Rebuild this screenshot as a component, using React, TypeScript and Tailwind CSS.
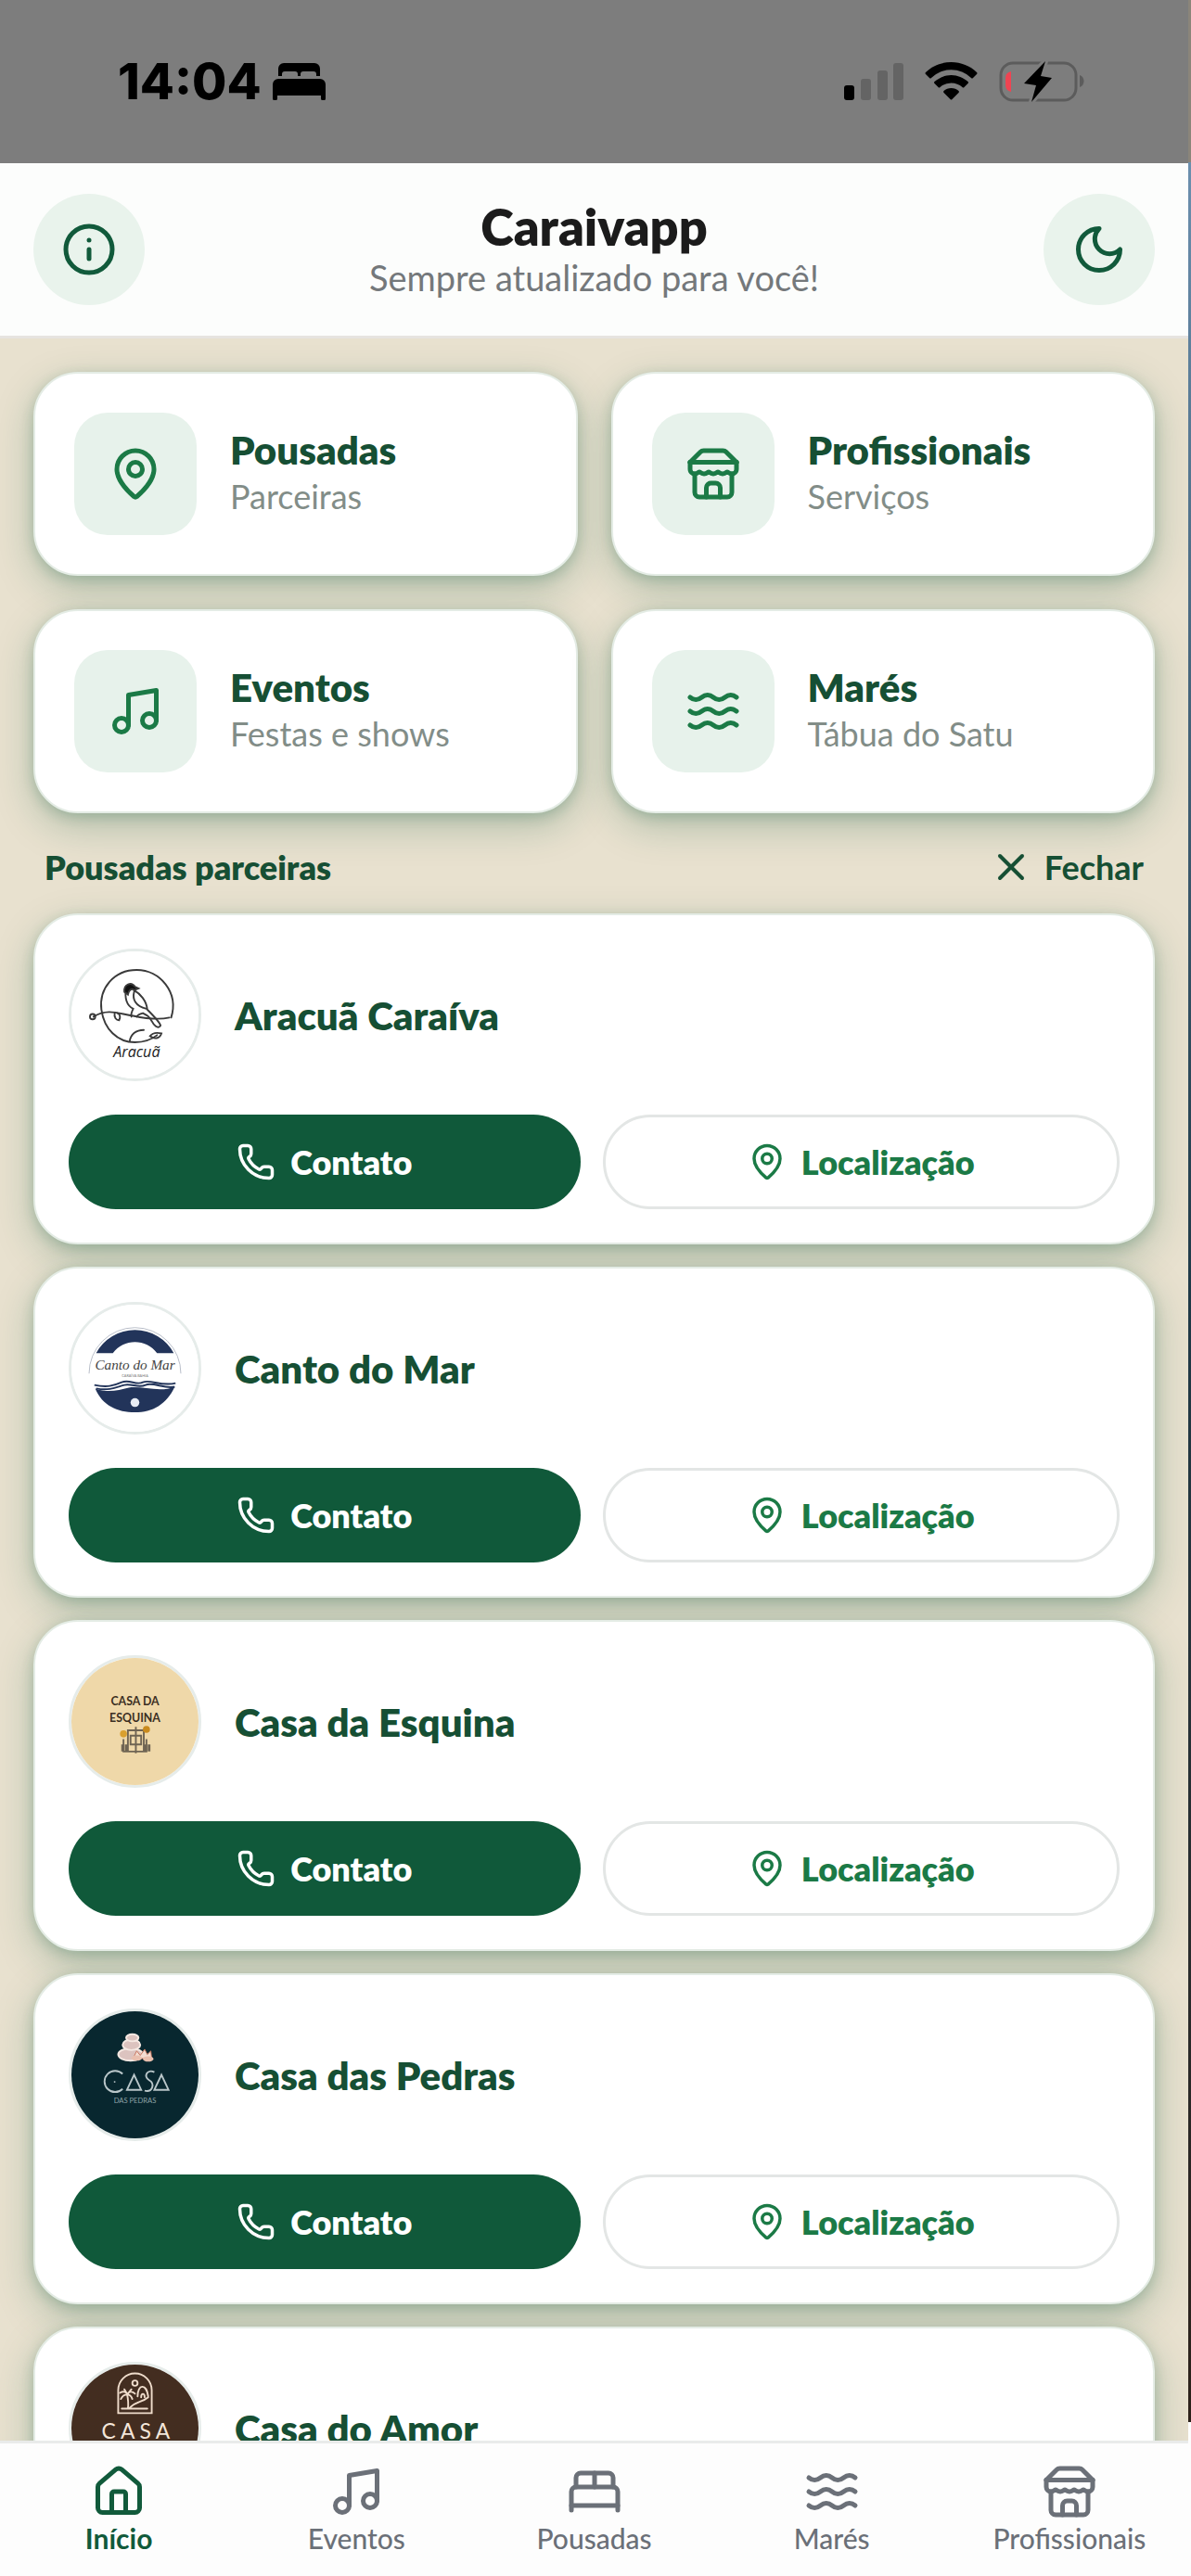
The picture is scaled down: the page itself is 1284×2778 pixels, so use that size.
import React from 'react';
import {
  BedDouble,
  House,
  Info,
  LucideIcon,
  MapPin,
  Music,
  Phone,
  Waves,
  X,
} from 'lucide-react';

interface IconProps {
  size?: number;
  className?: string;
}

type IconType = LucideIcon | React.FC<IconProps>;

interface Category {
  title: string;
  subtitle: string;
  icon: IconType;
}

interface Lodging {
  name: string;
  logo: React.FC;
}

const StoreIcon: React.FC<IconProps> = ({ size = 24, className }) => (
  <svg
    width={size}
    height={size}
    viewBox="0 0 24 24"
    fill="none"
    stroke="currentColor"
    strokeWidth="2"
    strokeLinecap="round"
    strokeLinejoin="round"
    className={className}
    aria-hidden="true"
  >
    <path d="m2 7 4.41-4.41A2 2 0 0 1 7.83 2h8.34a2 2 0 0 1 1.42.59L22 7" />
    <path d="M4 12v8a2 2 0 0 0 2 2h12a2 2 0 0 0 2-2v-8" />
    <path d="M15 22v-4a2 2 0 0 0-2-2h-2a2 2 0 0 0-2 2v4" />
    <path d="M2 7h20" />
    <path d="M22 7v3a2 2 0 0 1-2 2a2.7 2.7 0 0 1-1.59-.63.7.7 0 0 0-.82 0A2.7 2.7 0 0 1 16 12a2.7 2.7 0 0 1-1.59-.63.7.7 0 0 0-.82 0A2.7 2.7 0 0 1 12 12a2.7 2.7 0 0 1-1.59-.63.7.7 0 0 0-.82 0A2.7 2.7 0 0 1 8 12a2.7 2.7 0 0 1-1.59-.63.7.7 0 0 0-.82 0A2.7 2.7 0 0 1 4 12a2 2 0 0 1-2-2V7" />
  </svg>
);

const MoonIcon: React.FC<IconProps> = ({ size = 24, className }) => (
  <svg
    width={size}
    height={size}
    viewBox="0 0 24 24"
    fill="none"
    stroke="currentColor"
    strokeWidth="2"
    strokeLinecap="round"
    strokeLinejoin="round"
    className={className}
    aria-hidden="true"
  >
    <path d="M12 3a6 6 0 0 0 9 9 9 9 0 1 1-9-9Z" />
  </svg>
);

const AracuaLogo: React.FC = () => (
  <svg viewBox="0 0 144 144" className="size-full" fill="none" stroke="#3a3a3a" strokeWidth="2" strokeLinecap="round">
    <rect width="144" height="144" fill="#fff" stroke="none" />
    <path d="M113 75C122 46 100 21 74 21C48 21 31 42 34 66C37 88 52 103 72 103C84 103 92 99 97 95" />
    <path d="M25 74C42 64 54 71 70 73C84 76 98 78 111 75" />
    <circle cx="24" cy="74" r="3" />
    <path d="M49 70c-1 5 2 8 5 8c2-4 1-7-2-8" />
    <path d="M62 41c-2 12 0 20 8 24c-2 4-3 6-2 9M71 44c7 4 14 12 15 22c6 6 14 14 15 18c-3 5-8-1-10-5c-3-5-4-6-10-9c-4 1-6 2-7 4M71 46c-2 8 1 16 14 19" />
    <path d="M60 46c-1-9 8-12 12-6l4 2l-5 2c-3-3-6 0-7 5z" fill="#111" />
    <path d="M66 102c1-8 7-13 16-13M89 96c4-5 9-4 13-3c-2 6-8 7-13 3z" />
    <text x="74" y="120" textAnchor="middle" fill="#222" stroke="none" fontSize="17" fontStyle="italic" fontFamily="Open Sans, sans-serif" fontWeight="500">Aracuã</text>
  </svg>
);

const CantoLogo: React.FC = () => (
  <svg viewBox="0 0 144 144" className="size-full">
    <rect width="144" height="144" fill="#fff" />
    <path d="M20 78a52 52 0 0 1 104 0" fill="none" stroke="#b5bac6" strokeWidth="1" />
    <path d="M28 55a50 50 0 0 1 88 0h-19c-12-17-38-17-50 0z" fill="#22345a" />
    <path d="M27 95c14 5 26 2 38-1c15-2 36 6 52-1c-9 20-25 29-45 29s-37-8-45-27z" fill="#22345a" />
    <path d="M26 91c14 3 22 1 31-3s16 4 24 0s20 5 37 1M28 95c16 3 24-2 32-4s16 4 24 0s22 5 33 2" fill="none" stroke="#22345a" strokeWidth="2" />
    <circle cx="72" cy="111" r="5" fill="#e8edf5" />
    <text x="72" y="74" textAnchor="middle" fontSize="16" fontStyle="italic" fill="#444" fontFamily="Liberation Serif, serif">Canto do Mar</text>
    <text x="72" y="82" textAnchor="middle" fontSize="4" fill="#777" fontFamily="Lato, sans-serif">CARAÍVA BAHIA</text>
  </svg>
);

const EsquinaLogo: React.FC = () => (
  <svg viewBox="0 0 144 144" className="size-full">
    <rect width="144" height="144" fill="#efd8a9" />
    <g fill="#3b2e22" fontFamily="Lato, sans-serif" fontWeight="700" fontSize="13" textAnchor="middle">
      <text x="72" y="54">CASA DA</text>
      <text x="72" y="72">ESQUINA</text>
    </g>
    <g fill="none" stroke="#6f6453" strokeWidth="2">
      <path d="M64 106V82h18v24M59 92v14h26V92M73 78v30M67 88h12v10H67z" />
      <path d="M58 98v8M62 98v8M84 98v8M88 98v8" strokeWidth="3" />
    </g>
    <circle cx="59" cy="86" r="4" fill="#d9a02f" />
    <circle cx="85" cy="81" r="4" fill="#c98a1d" />
  </svg>
);

const PedrasLogo: React.FC = () => (
  <svg viewBox="0 0 144 144" className="size-full">
    <rect width="144" height="144" fill="#08272f" />
    <g fill="#dcc3bf" stroke="#f6e9e3" strokeWidth="2">
      <ellipse cx="67" cy="49" rx="14" ry="7" />
      <ellipse cx="68" cy="38" rx="10" ry="6" />
      <ellipse cx="69" cy="30" rx="7" ry="4" />
    </g>
    <path d="M70 53l4-8l4 5l5-7l3 6l4-4l1 9z" fill="#f3ddd2" stroke="#c9745b" strokeWidth="1" />
    <ellipse cx="74" cy="53" rx="6" ry="3" fill="#e9bfae" />
    <ellipse cx="87" cy="54" rx="6" ry="3" fill="#e9bfae" />
    <g fill="none" stroke="#b9c6c9" strokeWidth="2">
      <path d="M58 71a12 12 0 1 0 0 17M63 89l8-17l8 17zM94 69c-8-4-13 5-6 9s4 14-5 12M94 89l8-17l8 17z" />
    </g>
    <circle cx="49" cy="80" r="1" fill="#b9c6c9" />
    <text x="72" y="104" textAnchor="middle" fontSize="8" fill="#8fa3a8" fontFamily="Lato, sans-serif">DAS PEDRAS</text>
  </svg>
);

const AmorLogo: React.FC = () => (
  <svg viewBox="0 0 144 144" className="size-full">
    <rect width="144" height="144" fill="#432d20" />
    <g fill="none" stroke="#efdccb" strokeWidth="2" strokeLinecap="round">
      <path d="M53 55V29a19 19 0 0 1 38 0v26z" />
      <circle cx="72" cy="21" r="3" />
      <path d="M64 50c1-6 0-12-1-17M55 32c5-3 8 0 8 2c2-4 6-4 9-1M56 39c2-4 5-5 7-5c4 0 5 2 6 5M63 33l-3-5M64 33l4-5M66 49c8-8 14-6 21-12M75 36c0-14 10-15 12 0M79 37c0-5 4-5 4 0M57 50h29" />
    </g>
    <text x="73" y="84" textAnchor="middle" fontSize="24" fill="#f4e6da" fontFamily="Lato, sans-serif">C A S A</text>
  </svg>
);

const categories: Category[] = [
  { title: 'Pousadas', subtitle: 'Parceiras', icon: MapPin },
  { title: 'Profissionais', subtitle: 'Serviços', icon: StoreIcon },
  { title: 'Eventos', subtitle: 'Festas e shows', icon: Music },
  { title: 'Marés', subtitle: 'Tábua do Satu', icon: Waves },
];

const lodgings: Lodging[] = [
  { name: 'Aracuã Caraíva', logo: AracuaLogo },
  { name: 'Canto do Mar', logo: CantoLogo },
  { name: 'Casa da Esquina', logo: EsquinaLogo },
  { name: 'Casa das Pedras', logo: PedrasLogo },
  { name: 'Casa do Amor', logo: AmorLogo },
];

const navItems: { label: string; icon: IconType }[] = [
  { label: 'Início', icon: House },
  { label: 'Eventos', icon: Music },
  { label: 'Pousadas', icon: BedDouble },
  { label: 'Marés', icon: Waves },
  { label: 'Profissionais', icon: StoreIcon },
];

const StatusBar: React.FC = () => (
  <div className="flex h-[176px] shrink-0 items-center justify-between bg-[#7d7d7d] pl-[127px] pr-[112px] text-black">
    <div className="flex items-center gap-3">
      <span className="font-['Inter',sans-serif] text-[54px] font-extrabold leading-[60px]">14:04</span>
      <svg width="57" height="40" viewBox="0 0 57 40" fill="currentColor" aria-hidden="true">
        <path d="M6 14V6a6 6 0 0 1 6-6h33a6 6 0 0 1 6 6v8h-4v-2a3 3 0 0 0-3-3H33a3 3 0 0 0-3 3v2h-3v-2a3 3 0 0 0-3-3H13a3 3 0 0 0-3 3v2z" />
        <path d="M0 23a6 6 0 0 1 6-6h45a6 6 0 0 1 6 6v15a2 2 0 0 1-5 0v-3H5v3a2 2 0 0 1-5 0z" />
      </svg>
    </div>
    <div className="flex items-center gap-[23px]">
      <svg width="64" height="42" viewBox="0 0 64 42" aria-hidden="true">
        <rect x="0" y="25" width="11" height="16" rx="3" fill="#000" />
        <rect x="18" y="18" width="11" height="23" rx="3" fill="#646464" />
        <rect x="36" y="9" width="11" height="32" rx="3" fill="#646464" />
        <rect x="53" y="1" width="11" height="40" rx="3" fill="#646464" />
      </svg>
      <svg width="57" height="42" viewBox="0 0 57 42" aria-hidden="true">
        <path d="M28.500 0C39 0 49 4 56 11q1 1 0 2l-4 4q-1 1-2 0a31 31 0 0 0-43 0q-1 1-2 0l-4-4q-1-1 0-2C8 4 18 0 28.500 0z" />
        <path d="M28.500 14c7 0 13 3 18 7q1 1 0 2l-4 4q-1 1-2 0a18 18 0 0 0-24 0q-1 1-2 0l-4-4q-1-1 0-2c5-4 11-7 18-7z" />
        <path d="M28.500 28c3 0 6 1 8 3q1 1 0 2l-7 7q-1 1-2 0l-7-7q-1-1 0-2c2-2 5-3 8-3z" />
      </svg>
      <svg width="92" height="46" viewBox="0 0 92 46" aria-hidden="true">
        <rect x="2" y="3" width="81" height="40" rx="13" fill="none" stroke="#5c5c5c" strokeWidth="3" />
        <path d="M87 16c6 2 6 11 0 13z" fill="#5c5c5c" />
        <path d="M13 12v22c-4-1-6-3-6-8v-6c0-5 2-7 6-8z" fill="#ef4452" />
        <path d="M50 1L27 25l13 2l-5 18l22-26l-12-2z" fill="#000" stroke="#7d7d7d" strokeWidth="6" strokeLinejoin="round" paintOrder="stroke" />
      </svg>
    </div>
  </div>
);

const Header: React.FC = () => (
  <header className="flex h-[189px] shrink-0 items-center justify-between border-b-3 border-[#e6e4e0] bg-[#fcfdfc] px-9">
    <button aria-label="Informações" className="flex size-[120px] items-center justify-center rounded-full bg-[#e9f3ec] text-[#115a3b]">
      <Info size={60} />
    </button>
    <div className="text-center">
      <h1 className="text-[54px] font-extrabold leading-[60px] text-[#1b1b1b]">Caraivapp</h1>
      <p className="text-[38px] leading-[48px] text-[#74787b]">Sempre atualizado para você!</p>
    </div>
    <button aria-label="Modo escuro" className="flex size-[120px] items-center justify-center rounded-full bg-[#e9f3ec] text-[#115a3b]">
      <MoonIcon size={60} />
    </button>
  </header>
);

const cardStyle =
  'border-2 border-[#e4ece5] bg-white shadow-[0_4px_14px_rgba(16,90,60,0.2),0_14px_42px_rgba(16,90,60,0.26)]';

const CategoryCard: React.FC<{ category: Category }> = ({ category }) => {
  const Icon = category.icon;
  return (
    <button className={`flex items-center gap-9 rounded-[48px] p-[42px] text-left ${cardStyle}`}>
      <span className="flex size-[132px] shrink-0 items-center justify-center rounded-[36px] bg-[#e7f2eb] text-[#1b7a46]">
        <Icon size={60} />
      </span>
      <span className="flex flex-col pb-1">
        <span className="text-[42px] font-extrabold leading-[52px] text-[#164f34]">{category.title}</span>
        <span className="text-[36px] leading-[48px] text-[#828d88]">{category.subtitle}</span>
      </span>
    </button>
  );
};

const LodgingCard: React.FC<{ lodging: Lodging }> = ({ lodging }) => {
  const Logo = lodging.logo;
  return (
    <article className={`flex flex-col gap-9 rounded-[48px] p-9 ${cardStyle}`}>
      <div className="flex items-center gap-9">
        <div className="size-[143px] shrink-0 overflow-hidden rounded-full border-3 border-[#e6ecea]">
          <Logo />
        </div>
        <h3 className="text-[42px] font-extrabold leading-[52px] text-[#164f34]">{lodging.name}</h3>
      </div>
      <div className="flex gap-6">
        <button className="flex h-[102px] flex-1 items-center justify-center gap-4 rounded-full bg-[#10593a] text-[36px] font-extrabold leading-[48px] text-white">
          <Phone size={42} />
          Contato
        </button>
        <button className="flex h-[102px] flex-1 items-center justify-center gap-4 rounded-full border-3 border-[#e3e6e5] text-[36px] font-extrabold leading-[48px] text-[#1b7a46]">
          <MapPin size={42} />
          Localização
        </button>
      </div>
    </article>
  );
};

const BottomNav: React.FC = () => (
  <nav className="flex h-[146px] shrink-0 border-t-3 border-[#e9ebea] bg-[#fdfdfd] pt-[22px]">
    {navItems.map(({ label, icon: Icon }, index) => (
      <a
        key={label}
        href="#"
        className={`flex flex-1 basis-0 flex-col items-center gap-[3px] text-[30px] leading-[34px] ${
          index === 0 ? 'font-bold text-[#115a3b]' : 'font-medium text-[#6b7078]'
        }`}
      >
        <Icon size={60} />
        {label}
      </a>
    ))}
  </nav>
);

export default function App() {
  return (
    <div className="flex h-screen font-['Lato',sans-serif]">
      <div className="flex min-w-0 flex-1 flex-col">
        <StatusBar />
        <Header />
        <main className="min-h-0 flex-1 overflow-hidden bg-[#e8e1cf] px-9 pt-9">
          <section className="grid grid-cols-2 gap-9">
            {categories.map((category) => (
              <CategoryCard key={category.title} category={category} />
            ))}
          </section>
          <section>
            <div className="flex h-[108px] items-center justify-between px-3 pt-2 text-[36px] leading-[48px] text-[#164f34]">
              <h2 className="font-extrabold">Pousadas parceiras</h2>
              <button className="flex items-center gap-3 font-bold">
                <X size={48} />
                Fechar
              </button>
            </div>
            <div className="flex flex-col gap-6">
              {lodgings.map((lodging) => (
                <LodgingCard key={lodging.name} lodging={lodging} />
              ))}
            </div>
          </section>
        </main>
        <BottomNav />
      </div>
      {/* Sliver of the neighbouring screen */}
      <div className="flex w-[3px] shrink-0 flex-col">
        <div className="h-[175px] bg-[#8b857a]" />
        <div className="flex-1 bg-linear-to-b from-[#6b8fae] via-[#1f3a48] to-[#2c211a]" />
        <div className="h-[166px] bg-[#fdfdfd]" />
      </div>
    </div>
  );
}
